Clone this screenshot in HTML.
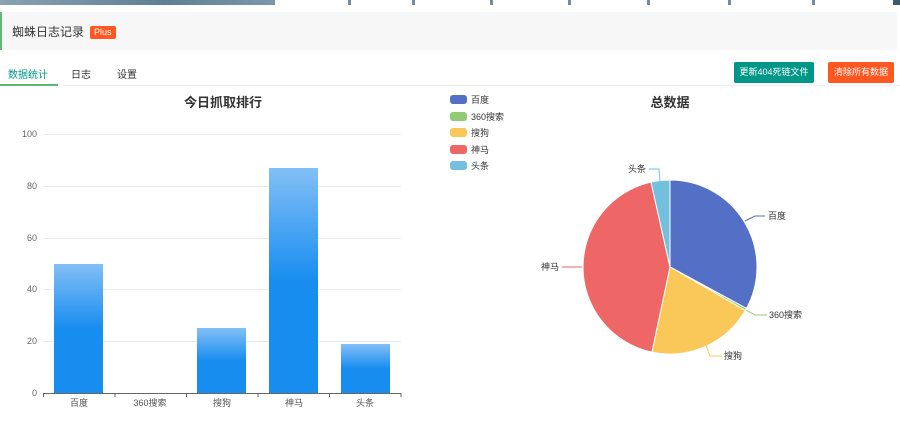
<!DOCTYPE html>
<html><head><meta charset="utf-8"><style>
body{margin:0;width:900px;height:432px;overflow:hidden;background:#fff;font-family:"Liberation Sans","Noto Sans CJK SC",sans-serif;position:relative}
.a{position:absolute}
.tk{position:absolute;top:0;width:3px;height:5px;background:#6f8ca0}
</style></head><body>
<div class="a" style="left:0;top:0;width:275px;height:5px;background:linear-gradient(90deg,#8aa2b2,#5f7f94 60%,#7a98aa)"></div>
<div class="tk" style="left:348px"></div><div class="tk" style="left:412px"></div><div class="tk" style="left:490px"></div><div class="tk" style="left:568px"></div><div class="tk" style="left:647px"></div><div class="tk" style="left:728px"></div><div class="tk" style="left:812px"></div><div class="tk" style="left:893px;width:7px;background:#3d5a6c"></div>
<div class="a" style="left:0;top:12px;width:895px;height:38px;background:#f7f7f7;border-left:2px solid #5fb878"></div>
<div class="a" style="left:12px;top:23px;font-size:12px;color:#333">蜘蛛日志记录</div>
<div class="a" style="left:90px;top:26px;height:13px;padding:0 4px;background:#ff5722;color:#fff;font-size:9px;line-height:13px;border-radius:2px">Plus</div>
<div class="a" style="left:8px;top:66px;font-size:10px;color:#009688">数据统计</div>
<div class="a" style="left:71px;top:66px;font-size:10px;color:#333">日志</div>
<div class="a" style="left:117px;top:66px;font-size:10px;color:#333">设置</div>
<div class="a" style="left:0;top:84px;width:58px;height:2px;background:#5fb878"></div>
<div class="a" style="left:58px;top:85px;width:842px;height:1px;background:#f0f0f0"></div>
<div class="a" style="left:734px;top:62px;width:80px;height:21px;background:#009688;color:#fff;font-size:9px;line-height:21px;text-align:center;border-radius:2px">更新404死链文件</div>
<div class="a" style="left:828px;top:62px;width:66px;height:21px;background:#ff5722;color:#fff;font-size:9px;line-height:21px;text-align:center;border-radius:2px">清除所有数据</div>
<svg class="a" style="left:0;top:0" width="900" height="432" font-family="Liberation Sans,Noto Sans CJK SC,sans-serif">
<defs><linearGradient id="g" x1="0" y1="0" x2="0" y2="1"><stop offset="0" stop-color="#83bff6"/><stop offset="0.5" stop-color="#188df0"/><stop offset="1" stop-color="#188df0"/></linearGradient></defs>
<text x="223" y="107" font-size="13" font-weight="bold" fill="#333" text-anchor="middle">今日抓取排行</text>
<g stroke="#e8ecf3" stroke-width="1">
<line x1="43" y1="134.5" x2="401" y2="134.5"/><line x1="43" y1="186.5" x2="401" y2="186.5"/><line x1="43" y1="238.5" x2="401" y2="238.5"/><line x1="43" y1="289.5" x2="401" y2="289.5"/><line x1="43" y1="341.5" x2="401" y2="341.5"/></g>
<g font-size="9" fill="#666" text-anchor="end"><text x="37" y="137">100</text><text x="37" y="189">80</text><text x="37" y="241">60</text><text x="37" y="292">40</text><text x="37" y="344">20</text><text x="37" y="396">0</text></g>
<rect x="54" y="264" width="49" height="129" fill="url(#g)"/>
<rect x="197" y="328" width="49" height="65" fill="url(#g)"/>
<rect x="269" y="168" width="49" height="225" fill="url(#g)"/>
<rect x="341" y="344" width="49" height="49" fill="url(#g)"/>
<g stroke="#666"><line x1="43" y1="393.5" x2="401" y2="393.5"/><line x1="43.5" y1="393" x2="43.5" y2="397"/><line x1="115" y1="393" x2="115" y2="397"/><line x1="186.5" y1="393" x2="186.5" y2="397"/><line x1="258" y1="393" x2="258" y2="397"/><line x1="329.5" y1="393" x2="329.5" y2="397"/><line x1="401" y1="393" x2="401" y2="397"/></g>
<g font-size="9" fill="#555" text-anchor="middle"><text x="79" y="406">百度</text><text x="150" y="406">360搜索</text><text x="222" y="406">搜狗</text><text x="294" y="406">神马</text><text x="365" y="406">头条</text></g>
<text x="670" y="107" font-size="13" font-weight="bold" fill="#333" text-anchor="middle">总数据</text>
<g font-size="9" fill="#333">
<rect x="450" y="95" width="17" height="9" rx="3" fill="#5470c6"/><text x="471" y="103">百度</text>
<rect x="450" y="112" width="17" height="9" rx="3" fill="#91cc75"/><text x="471" y="120">360搜索</text>
<rect x="450" y="128" width="17" height="9" rx="3" fill="#fac858"/><text x="471" y="136">搜狗</text>
<rect x="450" y="145" width="17" height="9" rx="3" fill="#ee6666"/><text x="471" y="153">神马</text>
<rect x="450" y="161" width="17" height="9" rx="3" fill="#73c0de"/><text x="471" y="169">头条</text></g>
<g stroke="#fff" stroke-width="1">
<path d="M670 267 L670 180 A87 87 0 0 1 746.5 308.4 Z" fill="#5470c6"/>
<path d="M670 267 L746.5 308.4 A87 87 0 0 1 745.3 310.5 Z" fill="#91cc75"/>
<path d="M670 267 L745.3 310.5 A87 87 0 0 1 651.9 352.1 Z" fill="#fac858"/>
<path d="M670 267 L651.9 352.1 A87 87 0 0 1 651 182.1 Z" fill="#ee6666"/>
<path d="M670 267 L651 182.1 A87 87 0 0 1 670 180 Z" fill="#73c0de"/></g>
<g fill="none"><path d="M745 221 L755 216 L765 216" stroke="#5470c6"/><path d="M746 310 L755 315 L767 315" stroke="#91cc75"/><path d="M706 345 L710 356 L722 356" stroke="#fac858"/><path d="M582 267 L562 267" stroke="#ee6666"/><path d="M660 181 L659 169 L649 169" stroke="#73c0de"/></g>
<g font-size="9" fill="#333"><text x="768" y="219">百度</text><text x="769" y="318">360搜索</text><text x="724" y="359">搜狗</text><text x="541" y="270">神马</text><text x="628" y="172">头条</text></g>
</svg>
</body></html>
